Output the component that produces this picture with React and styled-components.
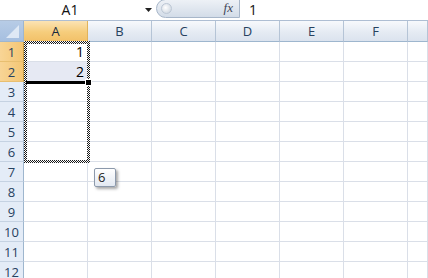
import React from 'react';
import styled, { createGlobalStyle } from 'styled-components';

const GlobalStyle = createGlobalStyle`
  html, body {
    margin: 0;
    padding: 0;
    background: #ffffff;
    overflow: hidden;
  }
  body {
    font-family: "Open Sans", "Liberation Sans", sans-serif;
  }
`;

const Window = styled.div`
  width: 428px;
  height: 278px;
  overflow: hidden;
  background: #ffffff;
`;

const FormulaBar = styled.div`
  display: flex;
  align-items: stretch;
  height: 20px;
  border-bottom: 1px solid #aebed3;
  background: #ffffff;
`;

const NameBox = styled.div`
  width: 140px;
  display: flex;
  align-items: center;
  justify-content: center;
  font-size: 14px;
  color: #111;
  padding-bottom: 2px;
`;

const Dropdown = styled.div`
  width: 16px;
  display: flex;
  align-items: center;
  justify-content: center;
`;

const Pill = styled.div`
  width: 84px;
  height: 19px;
  margin-top: -1px;
  border: 1px solid #a7b6c9;
  border-radius: 10px 0 0 10px;
  background: linear-gradient(#edf1f6, #d3dce8);
  display: flex;
  align-items: center;
  justify-content: space-between;
  padding: 0 6px 0 4px;
  box-sizing: border-box;
`;

const Knob = styled.div`
  width: 9px;
  height: 9px;
  border-radius: 50%;
  background: radial-gradient(circle at 40% 40%, #ffffff, #c4ceda);
  border: 1px solid #bcc7d5;
`;

const Fx = styled.span`
  font-family: "Liberation Serif", serif;
  font-style: italic;
  font-size: 13px;
  color: #3e4657;
  padding-bottom: 2px;
`;

const FormulaInput = styled.div`
  flex: 1;
  display: flex;
  align-items: center;
  padding-left: 9px;
  font-size: 14px;
  color: #111;
  padding-bottom: 2px;
`;

const Sheet = styled.div`
  position: relative;
  display: grid;
  grid-template-columns: 24px repeat(6, 64px) 1fr;
  grid-template-rows: 21px repeat(12, 20px);
`;

const Corner = styled.div`
  background: linear-gradient(#b7cce6, #a6bfe0);
  border-right: 1px solid #9eb6ce;
  border-bottom: 1px solid #9eb6ce;
  box-sizing: border-box;
  position: relative;
  overflow: hidden;
`;

const ColHead = styled.div`
  box-sizing: border-box;
  display: flex;
  align-items: center;
  justify-content: center;
  font-size: 13px;
  color: ${p => (p.$sel ? '#15273f' : '#27415f')};
  background: ${p =>
    p.$sel
      ? 'linear-gradient(#fbe3b4, #f6cd7c 55%, #f2c169)'
      : 'linear-gradient(#f7f9fc, #e5ebf3 55%, #dbe3ee)'};
  border-right: 1px solid ${p => (p.$sel ? '#e0b35c' : '#b5c4d6')};
  border-bottom: 1px solid ${p => (p.$sel ? '#c39a46' : '#9eb6ce')};
`;

const RowHead = styled.div`
  box-sizing: border-box;
  display: flex;
  align-items: center;
  justify-content: center;
  font-size: 13px;
  color: #27415f;
  background: ${p =>
    p.$sel ? 'linear-gradient(90deg, #f8d596, #f4c674)' : '#e4ecf7'};
  border-right: 1px solid ${p => (p.$sel ? '#c39a46' : '#9eb6ce')};
  border-bottom: 1px solid ${p => (p.$sel ? '#e8bf70' : '#c5d2e2')};
`;

const Cell = styled.div`
  box-sizing: border-box;
  display: flex;
  align-items: center;
  justify-content: flex-end;
  padding-right: 3px;
  font-size: 14px;
  color: #000;
  background: ${p => (p.$shade ? '#e6e9f3' : '#ffffff')};
  border-right: 1px solid #dadfe8;
  border-bottom: 1px solid #dadfe8;
`;

const Ants = styled.div`
  position: absolute;
  left: 24px;
  top: 20px;
  width: 66px;
  height: 122px;
  box-sizing: border-box;
  padding: 3px;
  background: repeating-conic-gradient(#1a1a1a 0 25%, #ffffff 0 50%) 0 0 / 2px 2px;
  -webkit-mask: linear-gradient(#000 0 0) content-box, linear-gradient(#000 0 0);
  -webkit-mask-composite: xor;
  mask-composite: exclude;
`;

const FillLine = styled.div`
  position: absolute;
  left: 26px;
  top: 60px;
  width: 60px;
  height: 3px;
  background: #000;
`;

const FillHandle = styled.div`
  position: absolute;
  left: 85px;
  top: 58px;
  width: 5px;
  height: 5px;
  background: #000;
  border: 1px solid #fff;
`;

const Tip = styled.div`
  position: absolute;
  left: 94px;
  top: 147px;
  width: 22px;
  height: 19px;
  box-sizing: border-box;
  border: 1px solid #8c99ab;
  border-radius: 2px;
  background: linear-gradient(#ffffff, #e2e8f1);
  box-shadow: 2px 2px 3px rgba(0, 0, 0, 0.35);
  font-size: 13px;
  color: #222;
  padding-left: 3px;
  line-height: 16px;
`;

const cols = ['A', 'B', 'C', 'D', 'E', 'F', ''];
const values = { 1: '1', 2: '2' };

export default function App() {
  return (
    <Window>
      <GlobalStyle />
      <FormulaBar>
        <NameBox>A1</NameBox>
        <Dropdown>
          <svg width="7" height="4" viewBox="0 0 7 4">
            <path d="M0 0h7L3.5 4z" fill="#222" />
          </svg>
        </Dropdown>
        <Pill>
          <Knob />
          <Fx>fx</Fx>
        </Pill>
        <FormulaInput>1</FormulaInput>
      </FormulaBar>
      <Sheet>
        <Corner>
          <svg width="24" height="21" style={{ position: 'absolute', left: 0, top: 0 }}>
            <path d="M19 4V17H6z" fill="#e8eef8" opacity="0.85" />
          </svg>
        </Corner>
        {cols.map((c, i) => (
          <ColHead key={'h' + i} $sel={c === 'A'}>{c}</ColHead>
        ))}
        {Array.from({ length: 12 }, (_, r) => {
          const row = r + 1;
          return (
            <React.Fragment key={row}>
              <RowHead $sel={row <= 2}>{row}</RowHead>
              {cols.map((c, i) => (
                <Cell key={c + i} $shade={c === 'A' && row === 2}>
                  {c === 'A' ? values[row] : ''}
                </Cell>
              ))}
            </React.Fragment>
          );
        })}
        <Ants />
        <FillLine />
        <FillHandle />
        <Tip>6</Tip>
      </Sheet>
    </Window>
  );
}
